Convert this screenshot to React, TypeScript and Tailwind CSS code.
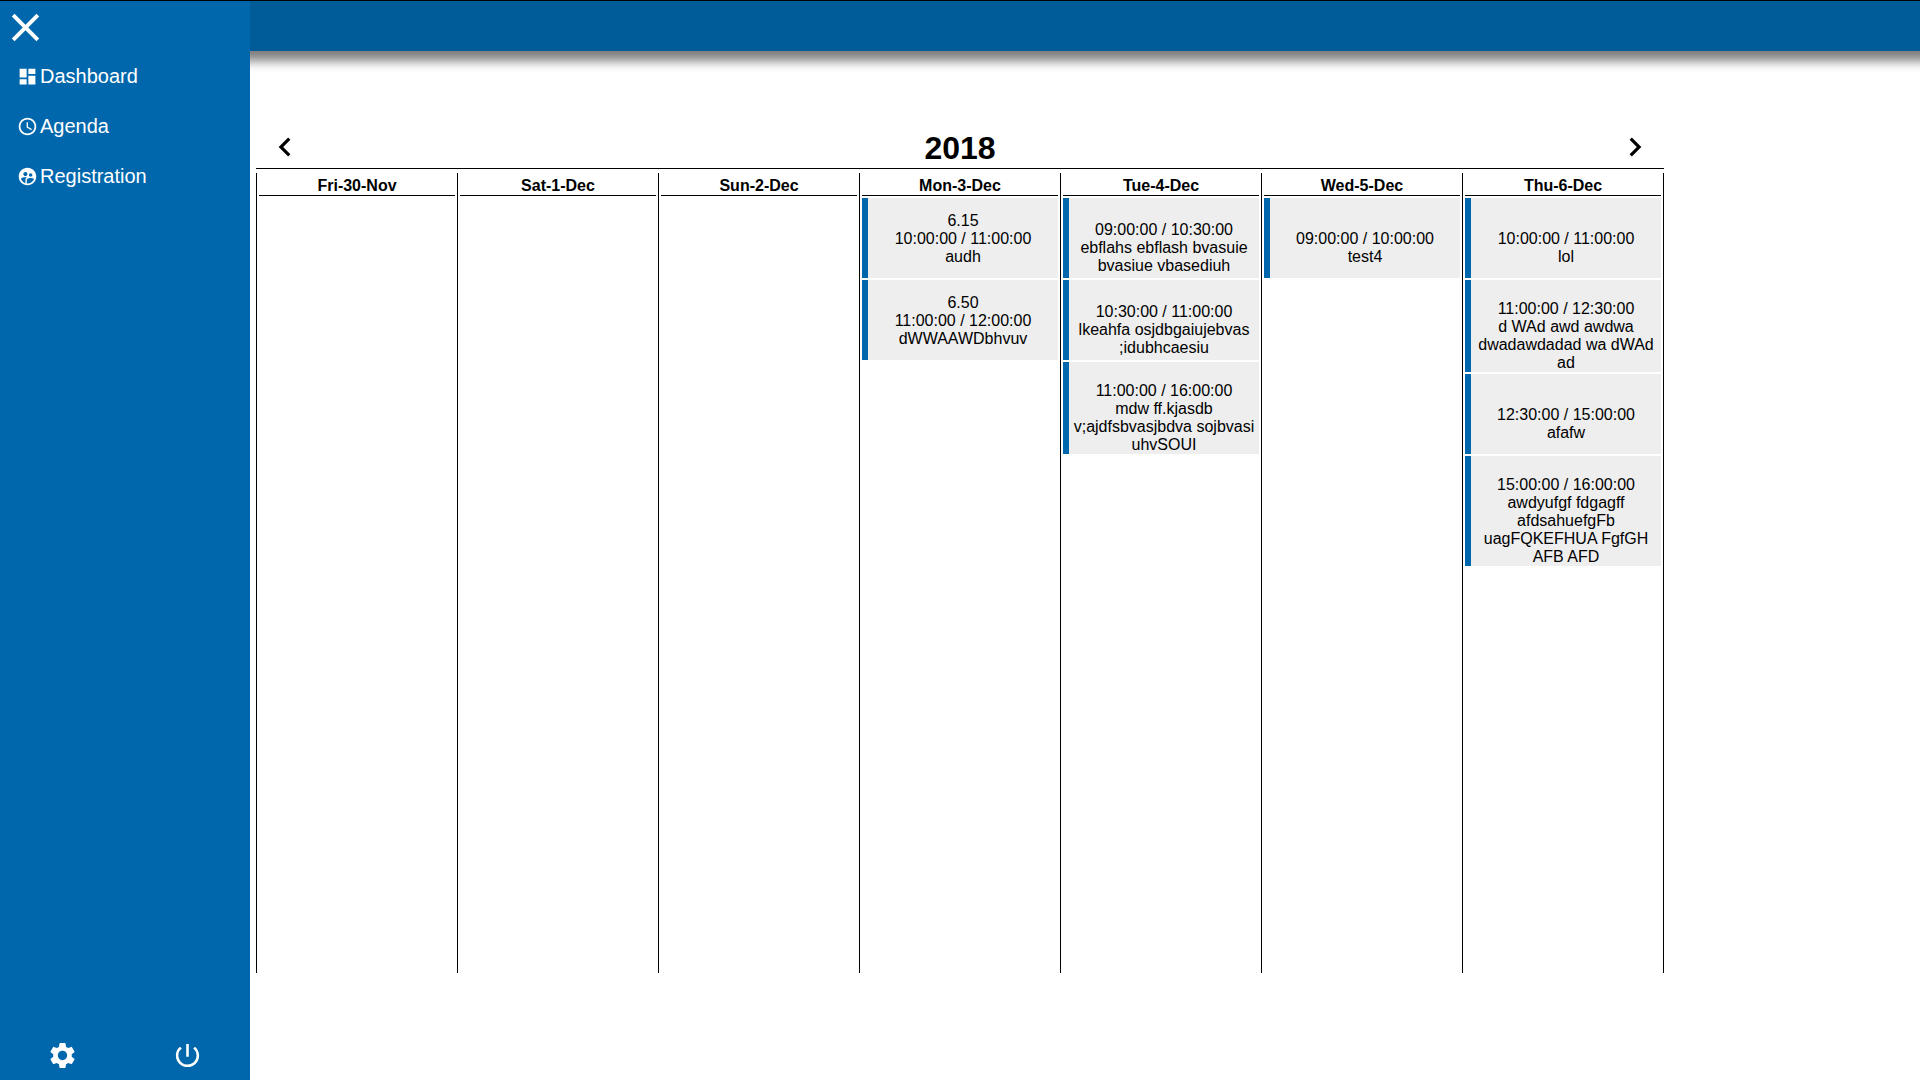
import type { ReactNode } from "react";
import {
  MdAccessTime,
  MdChevronLeft,
  MdChevronRight,
  MdClose,
  MdDashboard,
  MdPowerSettingsNew,
  MdSettings,
  MdSupervisedUserCircle,
} from "react-icons/md";

type Lesson = { room?: string; time: string; text: string };
type Day = { label: string; lessons: Lesson[] };

const days: Day[] = [
  { label: "Fri-30-Nov", lessons: [] },
  { label: "Sat-1-Dec", lessons: [] },
  { label: "Sun-2-Dec", lessons: [] },
  {
    label: "Mon-3-Dec",
    lessons: [
      { room: "6.15", time: "10:00:00 / 11:00:00", text: "audh" },
      { room: "6.50", time: "11:00:00 / 12:00:00", text: "dWWAAWDbhvuv" },
    ],
  },
  {
    label: "Tue-4-Dec",
    lessons: [
      { time: "09:00:00 / 10:30:00", text: "ebflahs ebflash bvasuie bvasiue vbasediuh" },
      { time: "10:30:00 / 11:00:00", text: "lkeahfa osjdbgaiujebvas ;idubhcaesiu" },
      { time: "11:00:00 / 16:00:00", text: "mdw ff.kjasdb v;ajdfsbvasjbdva sojbvasi uhvSOUI" },
    ],
  },
  { label: "Wed-5-Dec", lessons: [{ time: "09:00:00 / 10:00:00", text: "test4" }] },
  {
    label: "Thu-6-Dec",
    lessons: [
      { time: "10:00:00 / 11:00:00", text: "lol" },
      { time: "11:00:00 / 12:30:00", text: "d WAd awd awdwa dwadawdadad wa dWAd ad" },
      { time: "12:30:00 / 15:00:00", text: "afafw" },
      { time: "15:00:00 / 16:00:00", text: "awdyufgf fdgagff afdsahuefgFb uagFQKEFHUA FgfGH AFB AFD" },
    ],
  },
];

function NavItem({ icon, children }: { icon: ReactNode; children: ReactNode }) {
  return (
    <a href="#" className="flex h-[50px] items-center gap-0.5 pl-[17px] text-[20px] leading-6">
      <span className="pt-px">{icon}</span>
      <span>{children}</span>
    </a>
  );
}

function LessonCard({ lesson }: { lesson: Lesson }) {
  return (
    <article className="flex min-h-20 flex-col justify-center border-l-[6px] border-[#0067ac] bg-[#eeeeee] px-px pt-0.5 text-center text-base leading-[18px]">
      <p className="min-h-[18px]">{lesson.room}</p>
      <p>{lesson.time}</p>
      <p>{lesson.text}</p>
    </article>
  );
}

function DayColumn({ day }: { day: Day }) {
  return (
    <section className="flex min-w-0 flex-col gap-0.5 border-l border-black px-0.5 pt-0.5">
      <h2 className="border-b border-black px-px pt-0.5 text-center text-base leading-[18px] font-bold">{day.label}</h2>
      {day.lessons.map((lesson) => (
        <LessonCard key={lesson.time} lesson={lesson} />
      ))}
    </section>
  );
}

export default function App() {
  return (
    <div className="flex min-h-screen overflow-x-clip bg-white font-['Liberation_Sans',Arial,sans-serif] text-black">
      <aside className="relative z-10 flex w-[250px] shrink-0 flex-col border-t border-black bg-[#0067ac] text-white">
        <div className="flex h-[50px] items-center pt-[3px] pl-0.5">
          <button type="button" aria-label="Close menu">
            <MdClose size={47} />
          </button>
        </div>
        <nav>
          <NavItem icon={<MdDashboard size={21} />}>Dashboard</NavItem>
          <NavItem icon={<MdAccessTime size={21} />}>Agenda</NavItem>
          <NavItem icon={<MdSupervisedUserCircle size={21} />}>Registration</NavItem>
        </nav>
        <div className="mt-auto grid h-[50px] grid-cols-2">
          <button type="button" aria-label="Settings" className="flex items-center justify-center">
            <MdSettings size={31} />
          </button>
          <button type="button" aria-label="Log out" className="flex items-center justify-center">
            <MdPowerSettingsNew size={31} />
          </button>
        </div>
      </aside>
      <div className="flex min-w-0 grow flex-col">
        <header className="h-[51px] border-t border-black bg-[#005b99] shadow-[0_-10px_10px_20px_#808080]" />
        <main className="max-w-[1414px] pt-[75px] pl-1.5">
          <div className="flex h-[43px] items-center justify-between border-b border-black px-2.5">
            <button type="button" aria-label="Previous week">
              <MdChevronLeft size={38} />
            </button>
            <h1 className="pt-0.5 text-[32px] leading-9 font-bold">2018</h1>
            <button type="button" aria-label="Next week">
              <MdChevronRight size={38} />
            </button>
          </div>
          <div className="mt-1 grid min-h-[800px] grid-cols-7 border-r border-black">
            {days.map((day) => (
              <DayColumn key={day.label} day={day} />
            ))}
          </div>
        </main>
      </div>
    </div>
  );
}
